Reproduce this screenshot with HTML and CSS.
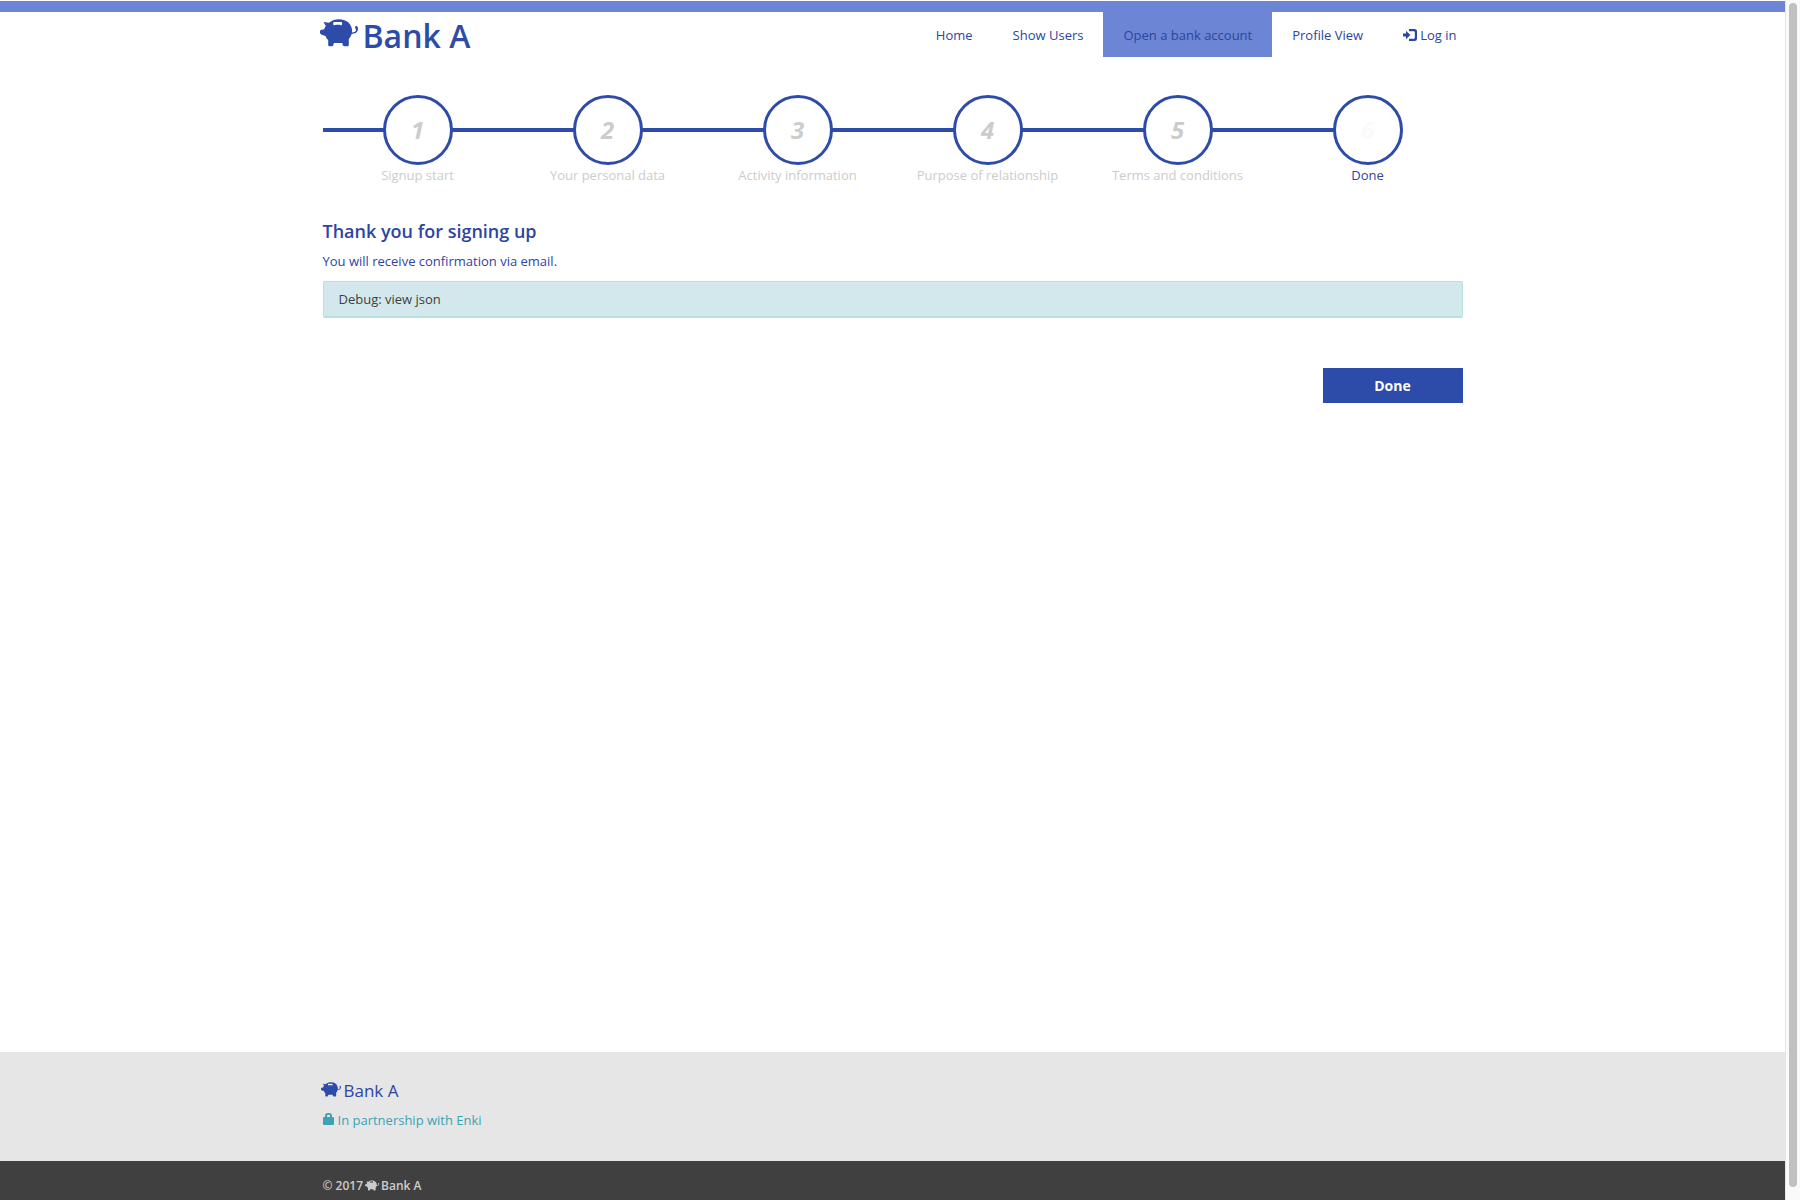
FILE: index.html
```html
<!DOCTYPE html>
<html lang="en">
<head>
<meta charset="utf-8">
<title>Bank A</title>
<link rel="stylesheet" href="styles.css">
</head>
<body>
<svg class="sprite" aria-hidden="true">
  <symbol id="pig" viewBox="0 0 38 28">
    <path fill-rule="evenodd" d="M3.500 3 9 3.800C12 1.200 15 .2 19 .2c7 0 11.500 3.600 12.800 9.300.3 1.600.4 2.800.2 4 2.700-.3 4-1.200 4-2.600 0-1-.9-1.400-.9-2.400 0-1.100.8-1.600 1.500-1.400 1.300.4 1.700 2.600 1.200 4.200-.6 2.300-2.700 3.500-6.200 3.700-.6 2-1.600 3.600-2.800 5v5.800c0 .9-.4 1.500-1.200 1.500h-3.500c-.8 0-1.300-.4-1.400-1.200l-.4-2h-8.500l-.4 2c-.2.800-.6 1.200-1.400 1.200H9.400c-.8 0-1.200-.4-1.200-1.200V21c-1.200-1-2-2.300-2.700-4L1.800 15.700C.6 15.300 0 14.600 0 13.500v-1c0-1 .6-1.600 1.600-1.700l2.600-.5c.3-1.200.9-2.300 1.600-3.300ZM14.200 3c-.6 0-.9.500-.9 1.200v1.300c0 .6.400.8 1 .7 2.300-.5 4.500-.5 6.800 0 .6.100.9-.1.900-.7V4.200c0-.7-.3-1.200-1-1.200Z"/>
  </symbol>
  <symbol id="login" viewBox="0 0 14 12">
    <path d="M0 4.500h3V1.700L7.300 6 3 10.300V7.500H0Z"/>
    <path d="M6 0h5.500A2.500 2.500 0 0 1 14 2.500v7a2.500 2.500 0 0 1-2.500 2.500H6V9.800h4.800a1 1 0 0 0 1-1V3.200a1 1 0 0 0-1-1H6Z"/>
  </symbol>
  <symbol id="lock" viewBox="0 0 11 12">
    <path fill-rule="evenodd" d="M2 4V3a3 3 0 0 1 3-3h1a3 3 0 0 1 3 3v1h1a1 1 0 0 1 1 1v6a1 1 0 0 1-1 1H1a1 1 0 0 1-1-1V5a1 1 0 0 1 1-1Zm2 0h3V3a1.200 1.200 0 0 0-1.200-1.200h-.6A1.200 1.200 0 0 0 4 3Z"/>
  </symbol>
</svg>
<div class="viewport">
  <div class="page">
    <header class="site-header">
      <div class="container header-row">
        <a class="brand" href="#"><svg class="brand-pig"><use href="#pig"/></svg>Bank A</a>
        <nav class="nav">
          <a href="#">Home</a>
          <a href="#">Show Users</a>
          <a class="active" href="#">Open a bank account</a>
          <a href="#">Profile View</a>
          <a href="#"><svg class="login-icon"><use href="#login"/></svg>Log in</a>
        </nav>
      </div>
    </header>
    <main class="container main">
      <ol class="steps">
        <li><span class="circle">1</span><span>Signup start</span></li>
        <li><span class="circle">2</span><span>Your personal data</span></li>
        <li><span class="circle">3</span><span>Activity information</span></li>
        <li><span class="circle">4</span><span>Purpose of relationship</span></li>
        <li><span class="circle">5</span><span>Terms and conditions</span></li>
        <li class="current"><span class="circle">6</span><span>Done</span></li>
      </ol>
      <h1>Thank you for signing up</h1>
      <p class="lead">You will receive confirmation via email.</p>
      <div class="debug">Debug: view json</div>
      <div class="actions"><button type="button">Done</button></div>
    </main>
    <footer>
      <div class="partners">
        <div class="container">
          <div class="footer-brand"><svg class="footer-pig"><use href="#pig"/></svg>Bank A</div>
          <a class="partner" href="#"><svg class="lock-icon"><use href="#lock"/></svg>In partnership with Enki</a>
        </div>
      </div>
      <div class="legal">
        <div class="container legal-row">© 2017 <svg class="legal-pig"><use href="#pig"/></svg> Bank A</div>
      </div>
    </footer>
  </div>
  <div class="scrollbar"><div class="thumb"></div></div>
</div>
</body>
</html>
```
FILE: styles.css
```css
* { box-sizing: border-box; }
body {
  margin: 0;
  background: #fff;
  color: #2d45a2;
  font: 13px/20px "Open Sans", sans-serif;
}
a { color: inherit; text-decoration: none; }
svg { fill: currentColor; flex: none; }
.sprite { display: none; }
.viewport { display: flex; min-height: 100vh; }
.page { flex: 1; display: flex; flex-direction: column; padding-top: 1px; }
.container { width: 100%; max-width: 1140px; margin: 0 auto; }

.site-header { border-top: 11px solid #6c85d4; }
.header-row { display: flex; justify-content: space-between; }
.brand {
  display: flex;
  gap: 5px;
  margin-left: -3px;
  color: #2d4ba8;
  font-size: 32px;
  font-weight: 600;
  line-height: 48px;
}
.brand-pig { width: 38px; height: 28px; margin-top: 7px; }
.nav { display: flex; margin-right: -14px; }
.nav a { display: flex; align-items: center; height: 45px; padding: 0 20px; }
.nav .active { background: #6c85d4; }
.login-icon { width: 14px; height: 12px; margin-right: 3px; }

.main { flex: 1; padding-top: 35px; }
.steps {
  display: grid;
  grid-template-columns: repeat(6, 1fr);
  margin: 0;
  padding: 0;
  list-style: none;
  color: #ccc;
}
.steps li {
  display: flex;
  flex-direction: column;
  align-items: center;
  background: linear-gradient(#2d4ba8, #2d4ba8) 0 33px / 100% 4px no-repeat;
}
.steps .current { color: #2d45a2; background-size: 50% 4px; }
.circle {
  width: 70px;
  height: 70px;
  border: 3px solid #2d4ba8;
  border-radius: 50%;
  background: #fff;
  font-size: 24px;
  font-style: italic;
  font-weight: 700;
  line-height: 64px;
  text-align: center;
}
.current .circle { color: #fafafa; }
h1 { margin: 34px 0 8px; font-size: 18px; font-weight: 600; line-height: 24px; }
.lead { margin: 0 0 10px; }
.debug {
  padding: 7px 15px;
  border: 1px solid #b8e0e0;
  border-bottom-width: 2px;
  border-radius: 2px;
  background: #d3e8ec;
  color: #404040;
}
.actions { display: flex; justify-content: flex-end; margin-top: 50px; }
button {
  width: 140px;
  height: 35px;
  border: 0;
  background: #2d4ba8;
  color: #fff;
  font: 700 14px/20px "Open Sans", sans-serif;
}

.partners { padding: 27px 0 31px; background: #e6e6e6; }
.footer-brand { display: flex; gap: 3px; margin-left: -2px; font-size: 17px; line-height: 24px; }
.footer-pig { width: 20px; height: 15px; margin-top: 3px; color: #2d4ba8; }
.partner { display: flex; gap: 4px; margin-top: 7px; color: #3ba3b4; }
.lock-icon { width: 11px; height: 12px; margin-top: 3px; }
.legal { padding: 15px 0 4px; background: #404040; color: #ccc; font-size: 12px; font-weight: 600; }
.legal-row { display: flex; gap: 2px; }
.legal-pig { width: 14px; height: 11px; margin-top: 4px; }

.scrollbar {
  width: 15px;
  padding: 3px 3px 13px;
  border-left: 1px solid #e7e7e7;
  background: #fafafa;
  display: flex;
}
.thumb { width: 8px; border-radius: 4px; background: #c1c1c1; }
```
